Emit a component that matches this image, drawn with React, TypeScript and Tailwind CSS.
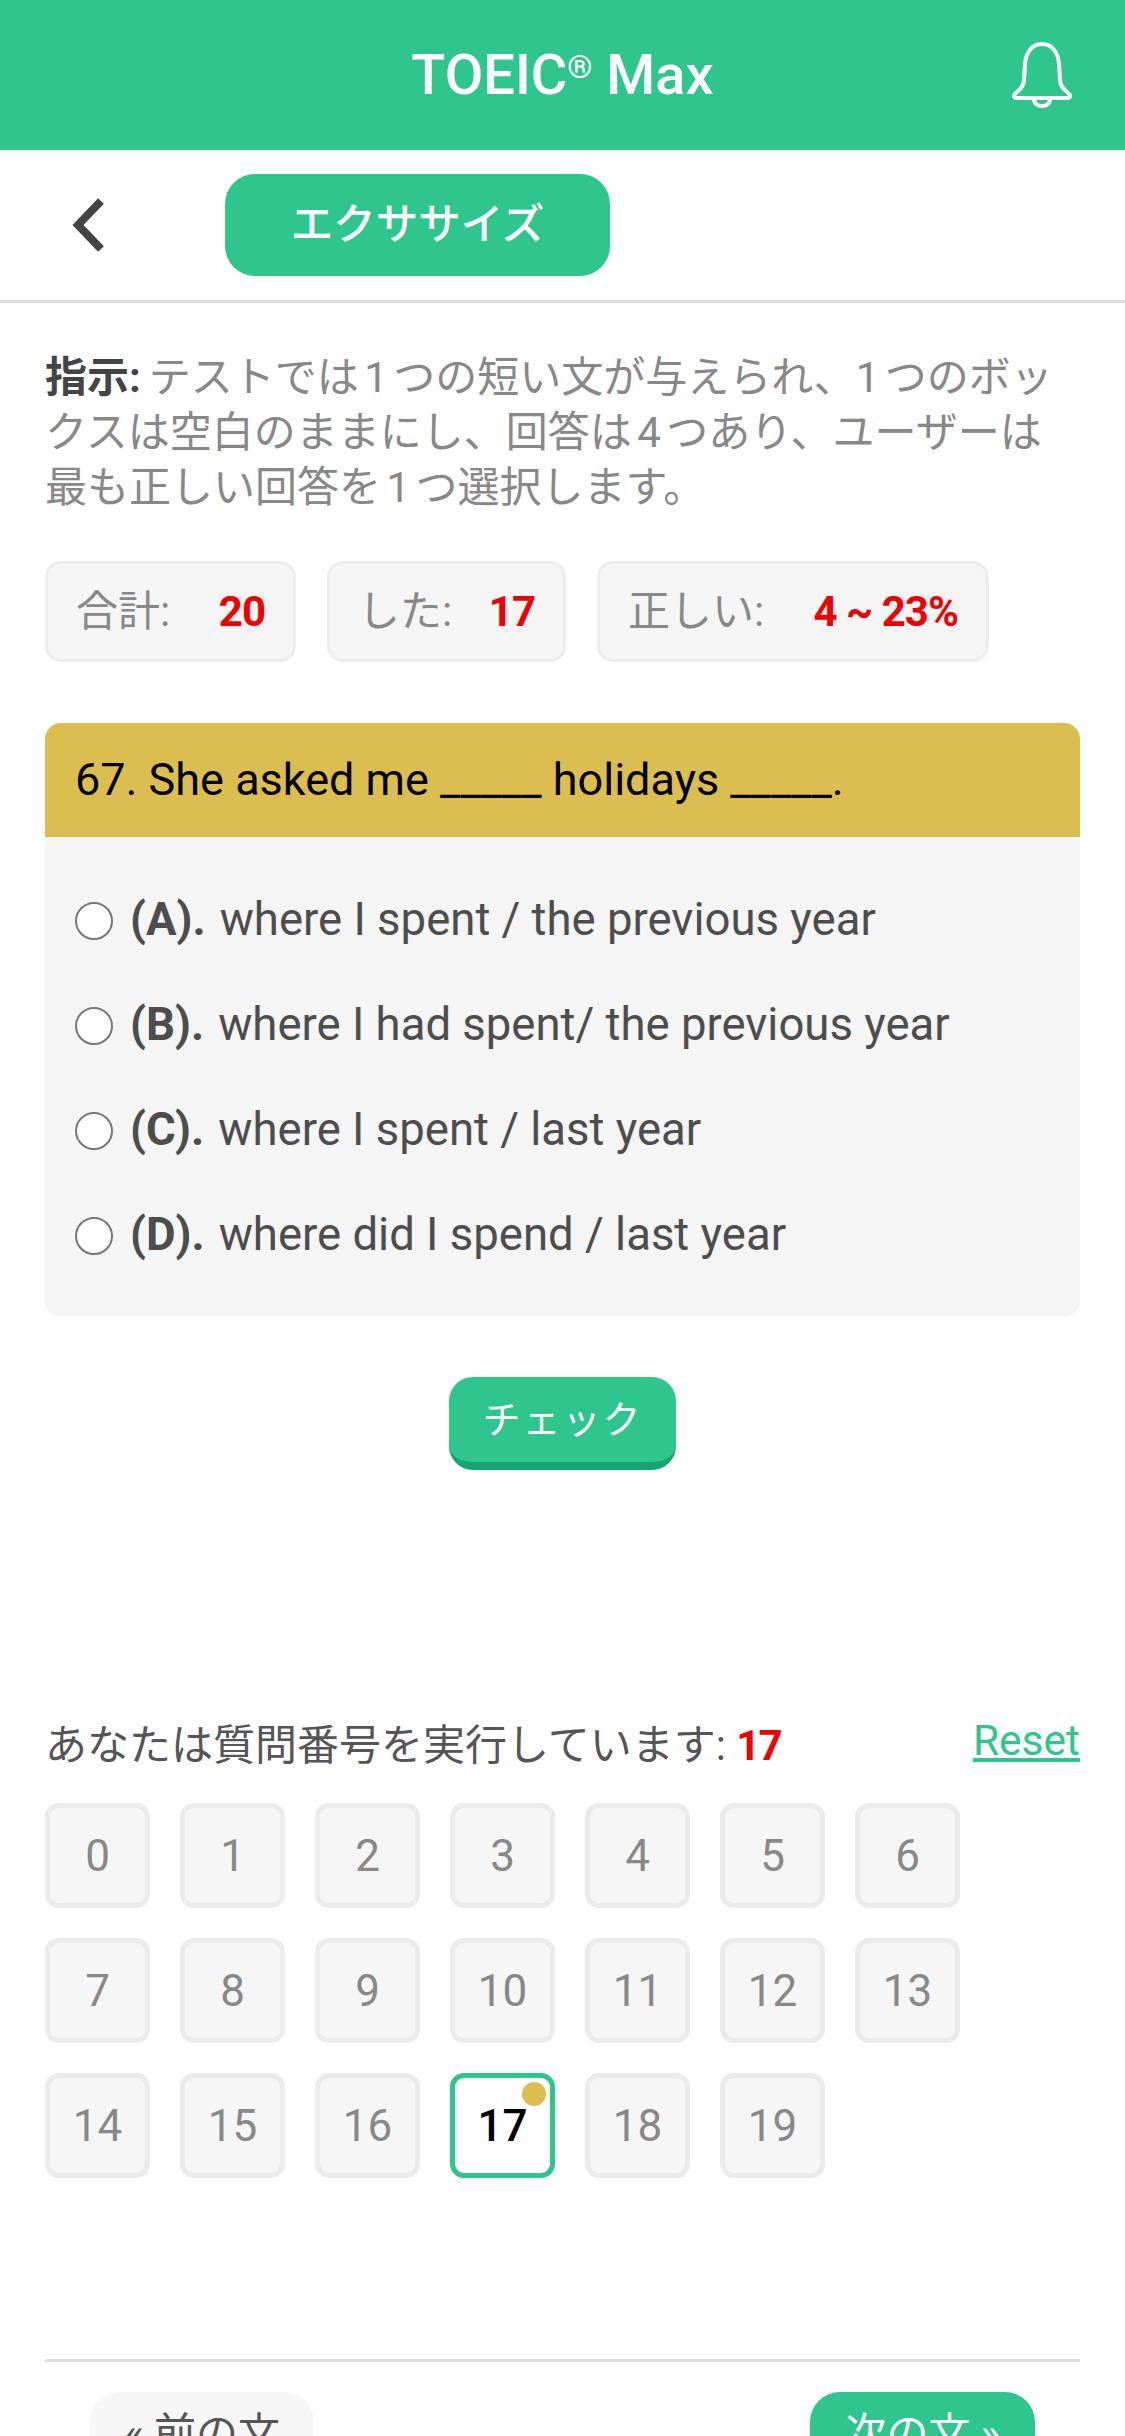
const GRID = Array.from({ length: 20 }, (_, i) => i);

const OPTIONS = [
  { key: "(A).", text: "where I spent / the previous year" },
  { key: "(B).", text: "where I had spent/ the previous year" },
  { key: "(C).", text: "where I spent / last year" },
  { key: "(D).", text: "where did I spend / last year" },
];

const FONT = "font-['Roboto','Noto_Sans_CJK_JP',sans-serif]";

function Bell() {
  return (
    <svg viewBox="0 0 60 66" className="h-[66px] w-[60px]" fill="none" stroke="white" strokeWidth="4" strokeLinejoin="round">
      <path d="M30 2 C20 2 14 10 13 22 L12 38 C12 45 7 48 3 52 C1 54 2 56 5 56 H55 C58 56 59 54 57 52 C53 48 48 45 48 38 L47 22 C46 10 40 2 30 2 Z" />
      <path d="M22 57 C22 62 26 64 30 64 C34 64 38 62 38 57" />
    </svg>
  );
}

function Stat({ label, value, width }: { label: string; value: string; width: string }) {
  return (
    <div className={`flex h-[101px] items-center justify-between rounded-[16px] border-[3px] border-[#ededed] bg-[#f5f5f5] px-[28px] ${width}`}>
      <span className="text-[#888888]">{label}</span>
      <span className="font-bold tracking-[-1px] text-[#f00000]">{value}</span>
    </div>
  );
}

function GridCell({ n }: { n: number }) {
  if (n === 17) {
    return (
      <div className="relative flex h-[105px] w-[105px] items-center justify-center rounded-[14px] border-[5px] border-[#2ec68c] bg-white text-[44px] font-medium text-black">
        17
        <span className="absolute right-[4px] top-[4px] h-[24px] w-[24px] rounded-full bg-[#dbbe4f]" />
      </div>
    );
  }
  return (
    <div className="flex h-[105px] w-[105px] items-center justify-center rounded-[14px] border-[5px] border-[#ebebeb] bg-[#f6f6f6] text-[44px] text-[#888888]">
      {n}
    </div>
  );
}

export default function App() {
  return (
    <div className={`h-[2436px] w-[1125px] overflow-hidden bg-white ${FONT}`}>
      <header className="relative flex h-[150px] items-center justify-center bg-[#2ec68c]">
        <h1 className="text-[56px] font-medium text-white">
          TOEIC<sup className="text-[32px]">®</sup> Max
        </h1>
        <div className="absolute right-[53px] top-[42px]">
          <Bell />
        </div>
      </header>

      <nav className="flex h-[153px] items-center border-b-[3px] border-[#dddddd] pl-[72px]">
        <svg viewBox="0 0 34 54" className="h-[54px] w-[34px]" fill="none" stroke="#444444" strokeWidth="8" strokeLinejoin="miter">
          <path d="M29 3 L6 27 L29 51" />
        </svg>
        <div className="ml-[119px] flex h-[102px] w-[385px] items-center justify-center rounded-[30px] bg-[#2ec68c] text-[42.5px] font-medium text-white">
          エクササイズ
        </div>
      </nav>

      <main className="px-[45px]">
        <p className="mt-[47px] text-[42px] leading-[55px] text-[#888888]">
          <span className="mr-[8px] font-bold text-[#444444]">指示:</span>
          <span className="[word-spacing:-5px]">テストでは 1 つの短い文が与えられ、1 つのボックスは空白のままにし、回答は 4 つあり、ユーザーは最も正しい回答を 1 つ選択します。</span>
        </p>

        <div className="mt-[46px] flex gap-[31px] text-[42px]">
          <Stat label="合計:" value="20" width="w-[251px]" />
          <Stat label="した:" value="17" width="w-[239px]" />
          <Stat label="正しい:" value="4 ~ 23%" width="w-[392px]" />
        </div>

        <section className="mt-[61px] overflow-hidden rounded-[16px] bg-[#f5f5f5]">
          <div className="flex h-[114px] items-center bg-[#dbbe4f] px-[30px] text-[45px] text-black">
            67. She asked me _____ holidays _____.
          </div>
          <div className="flex flex-col px-[30px] pb-[29px] pt-[31px]">
            {OPTIONS.map((o) => (
              <label key={o.key} className="flex h-[105px] items-center text-[45.5px] text-[#4d4d4d]">
                <span className="h-[38px] w-[38px] rounded-full border-2 border-[#777777] bg-white" />
                <span className="ml-[17px] font-bold">{o.key}</span>
                <span className="ml-[14px]">{o.text}</span>
              </label>
            ))}
          </div>
        </section>

        <div className="mt-[60px] flex justify-center">
          <button className="h-[93px] w-[227px] rounded-[24px] border-b-[8px] border-[#14a672] bg-[#2ec68c] pt-[2px] text-[38px] tracking-[2px] text-white">
            チェック
          </button>
        </div>

        <div className="mt-[244px] flex items-center justify-between">
          <p className="text-[42px] text-[#555555]">
            あなたは質問番号を実行しています: <span className="font-bold tracking-[-2px] text-[#f00000]">17</span>
          </p>
          <a className="-mt-[10px] text-[42.5px] text-[#2ec68c] underline">Reset</a>
        </div>

        <div className="mt-[26px] grid w-[1050px] grid-cols-[repeat(7,105px)] gap-[30px]">
          {GRID.map((n) => (
            <GridCell key={n} n={n} />
          ))}
        </div>

        <div className="mt-[181px] border-t-[3px] border-[#dddddd] px-[45px] pt-[30px]">
          <div className="flex justify-between text-[42px]">
            <div className="flex h-[100px] w-[224px] items-start justify-center rounded-[30px] bg-[#f7f7f7] pt-[10px] text-[#555555]">« 前の文</div>
            <div className="flex h-[100px] w-[225px] items-start justify-center rounded-[30px] bg-[#2ec68c] pt-[10px] text-white">次の文 »</div>
          </div>
        </div>
      </main>
    </div>
  );
}
